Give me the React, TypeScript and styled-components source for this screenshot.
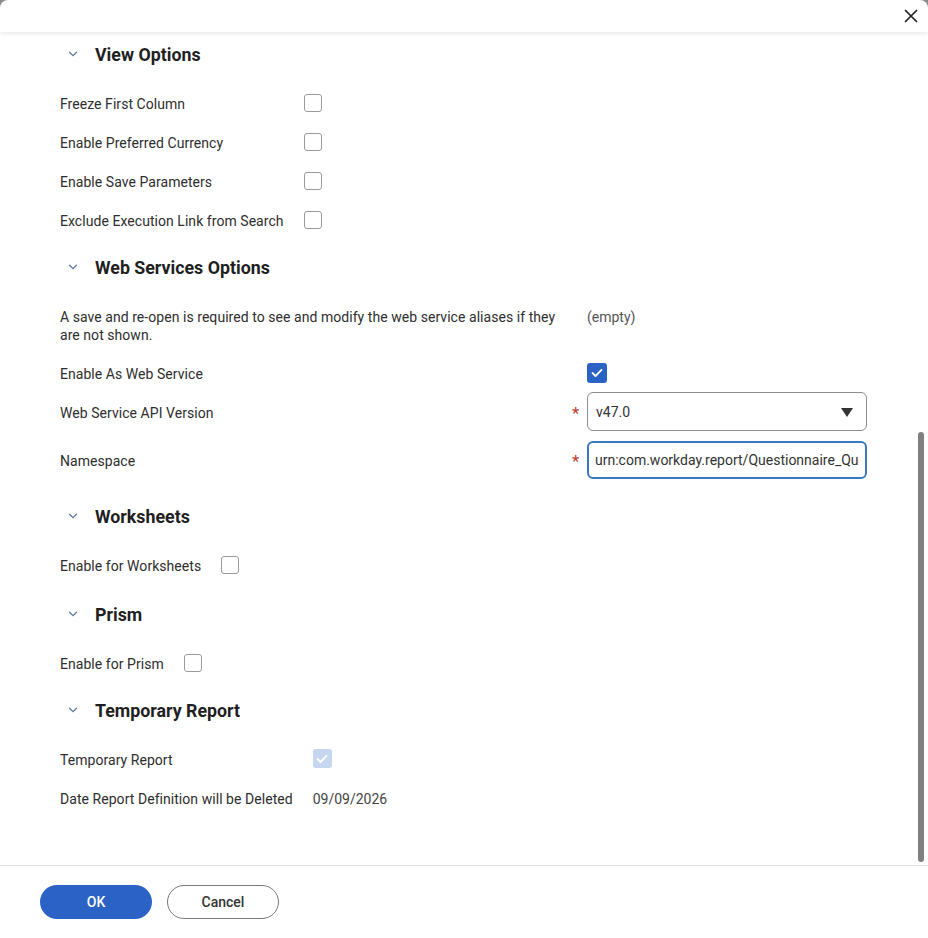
import React from "react";
import styled, { createGlobalStyle } from "styled-components";

const GlobalStyle = createGlobalStyle`
  html, body {
    margin: 0;
    padding: 0;
    background: #8a8a8a;
  }
  body {
    font-family: Roboto, "Noto Sans", "Liberation Sans", sans-serif;
    color: #333333;
  }
`;

const Dialog = styled.div`
  width: 928px;
  height: 938px;
  background: #ffffff;
  border-radius: 8px 8px 0 0;
  display: flex;
  flex-direction: column;
  overflow: hidden;
`;

const Header = styled.div`
  height: 32px;
  flex: none;
  display: flex;
  justify-content: flex-end;
  align-items: center;
  padding-right: 5px;
  box-shadow: 0 2px 4px rgba(0, 0, 0, 0.08);
  position: relative;
  z-index: 1;
`;

const CloseButton = styled.button`
  width: 24px;
  height: 24px;
  border: none;
  background: none;
  padding: 0;
  display: flex;
  align-items: center;
  justify-content: center;
  cursor: pointer;
`;

const Body = styled.div`
  flex: 1;
  display: flex;
  min-height: 0;
`;

const Content = styled.div`
  flex: 1;
  padding: 2px 0 0 60px;
  display: flex;
  flex-direction: column;
  gap: 8px;
`;

const ScrollTrack = styled.div`
  flex: none;
  display: flex;
  flex-direction: column;
  justify-content: flex-end;
  padding: 0 4px 3px 0;
`;

const ScrollThumb = styled.div`
  width: 6px;
  height: 430px;
  border-radius: 3px;
  background: #808080;
`;

const Section = styled.section<{ $tail?: number }>`
  display: flex;
  flex-direction: column;
  padding-bottom: ${(p) => p.$tail ?? 0}px;
`;

const SectionHeading = styled.div`
  height: 40px;
  display: flex;
  align-items: center;
  margin-bottom: 9px;
`;

const Chevron = styled.span`
  width: 35px;
  display: flex;
  align-items: center;
  padding-left: 8px;
  box-sizing: border-box;
`;

const SectionTitle = styled.h2`
  margin: 0;
  font-size: 17.8px;
  font-weight: 700;
  color: #1f1f1f;
`;

const FieldGrid = styled.div<{ $labelWidth?: string }>`
  display: grid;
  grid-template-columns: ${(p) => p.$labelWidth ?? "max-content"} auto;
  column-gap: 20px;
  justify-content: start;
`;

/* text sits a little low in its row, so the top padding is larger than the bottom */
const Label = styled.div<{ $pad?: number }>`
  font-size: 14px;
  line-height: 19px;
  color: #2e2e2e;
  letter-spacing: 0.05px;
  padding: ${(p) => (p.$pad ?? 10) + 1.5}px 0 ${(p) => (p.$pad ?? 10) - 1.5}px;
  display: flex;
  align-items: center;
  min-height: 19px;
`;

const Note = styled(Label)`
  line-height: 18px;
  padding: 12px 0 9px;
`;

const Value = styled.div<{ $pad?: number }>`
  display: flex;
  align-items: center;
  padding: ${(p) => p.$pad ?? 0}px 0;
  font-size: 14px;
  color: #444444;
`;

const DateValue = styled(Value)`
  padding-top: 3px;
`;

const EmptyValue = styled(Value)`
  align-items: flex-start;
  padding-top: 12px;
  line-height: 18px;
  color: #555555;
`;

const Box = styled.span<{ $checked?: boolean; $disabled?: boolean }>`
  width: ${(p) => (p.$checked ? (p.$disabled ? 19 : 20) : 18)}px;
  height: ${(p) => (p.$checked ? (p.$disabled ? 19 : 20) : 18)}px;
  box-sizing: border-box;
  border-radius: 3px;
  border: ${(p) => (p.$checked ? "none" : "1px solid #9a9a9a")};
  background: ${(p) =>
    p.$checked ? (p.$disabled ? "#c6d6ef" : "#2a62c6") : "#ffffff"};
  display: inline-flex;
  align-items: center;
  justify-content: center;
`;

const Required = styled.span`
  color: #c23b2a;
  font-size: 17px;
  margin-left: -15px;
  width: 15px;
  line-height: 1;
  padding-top: 4px;
`;

const SelectBox = styled.div`
  width: 280px;
  height: 39px;
  box-sizing: border-box;
  border: 1px solid #8c8c8c;
  border-radius: 6px;
  display: flex;
  align-items: center;
  justify-content: space-between;
  padding: 1px 13px 0 8px;
  font-size: 14px;
  color: #333333;
`;

const TextInput = styled.input`
  width: 280px;
  height: 38px;
  box-sizing: border-box;
  border: 2px solid #3b78c4;
  border-radius: 6px;
  padding: 1px 6px 0;
  font-family: inherit;
  font-size: 14px;
  color: #333333;
  outline: none;
`;

const Footer = styled.div`
  flex: none;
  height: 72px;
  border-top: 1px solid #e0e0e0;
  display: flex;
  align-items: center;
  gap: 15px;
  padding-left: 40px;
`;

const Button = styled.button<{ $primary?: boolean }>`
  width: 112px;
  height: 34px;
  border-radius: 17px;
  font-family: inherit;
  font-size: 14px;
  font-weight: 500;
  cursor: pointer;
  border: ${(p) => (p.$primary ? "none" : "1px solid #7a7a7a")};
  background: ${(p) => (p.$primary ? "#2a62c6" : "#ffffff")};
  color: ${(p) => (p.$primary ? "#ffffff" : "#333333")};
`;

const Check = ({ checked, disabled }: { checked?: boolean; disabled?: boolean }) => (
  <Box $checked={checked} $disabled={disabled}>
    {checked && (
      <svg width="12" height="10" viewBox="0 0 12 10">
        <polyline points="1.5,5 4.5,8 10.5,1.8" fill="none" stroke="#fff" strokeWidth="1.8" strokeLinecap="round" strokeLinejoin="round" />
      </svg>
    )}
  </Box>
);

const Heading = ({ title }: { title: string }) => (
  <SectionHeading>
    <Chevron>
      <svg width="10" height="6" viewBox="0 0 10 6">
        <polyline points="1.5,1.2 5,4.6 8.5,1.2" fill="none" stroke="#5b7aa5" strokeWidth="1.3" strokeLinecap="round" />
      </svg>
    </Chevron>
    <SectionTitle>{title}</SectionTitle>
  </SectionHeading>
);

const viewOptions = [
  "Freeze First Column",
  "Enable Preferred Currency",
  "Enable Save Parameters",
  "Exclude Execution Link from Search",
];

export default function App() {
  return (
    <>
      <GlobalStyle />
      <Dialog>
        <Header>
          <CloseButton aria-label="Close">
            <svg width="14" height="14" viewBox="0 0 14 14">
              <path d="M1.5 1.5 L12.5 12.5 M12.5 1.5 L1.5 12.5" stroke="#222" strokeWidth="1.7" strokeLinecap="round" />
            </svg>
          </CloseButton>
        </Header>
        <Body>
          <Content>
            <Section>
              <Heading title="View Options" />
              <FieldGrid>
                {viewOptions.map((label) => (
                  <React.Fragment key={label}>
                    <Label>{label}</Label>
                    <Value>
                      <Check />
                    </Value>
                  </React.Fragment>
                ))}
              </FieldGrid>
            </Section>

            <Section>
              <Heading title="Web Services Options" />
              <FieldGrid $labelWidth="507px">
                <Note>
                  A save and re-open is required to see and modify the web service aliases if they are not shown.
                </Note>
                <EmptyValue>(empty)</EmptyValue>

                <Label>Enable As Web Service</Label>
                <Value>
                  <Check checked />
                </Value>

                <Label $pad={10}>Web Service API Version</Label>
                <Value>
                  <Required>*</Required>
                  <SelectBox>
                    <span>v47.0</span>
                    <svg width="12" height="9" viewBox="0 0 12 9">
                      <polygon points="0,0 12,0 6,9" fill="#333" />
                    </svg>
                  </SelectBox>
                </Value>

                <Label $pad={19}>Namespace</Label>
                <Value $pad={9}>
                  <Required>*</Required>
                  <TextInput readOnly value="urn:com.workday.report/Questionnaire_Questions" />
                </Value>
              </FieldGrid>
            </Section>

            <Section $tail={2}>
              <Heading title="Worksheets" />
              <FieldGrid>
                <Label>Enable for Worksheets</Label>
                <Value>
                  <Check />
                </Value>
              </FieldGrid>
            </Section>

            <Section>
              <Heading title="Prism" />
              <FieldGrid>
                <Label>Enable for Prism</Label>
                <Value>
                  <Check />
                </Value>
              </FieldGrid>
            </Section>

            <Section>
              <Heading title="Temporary Report" />
              <FieldGrid>
                <Label>Temporary Report</Label>
                <Value>
                  <Check checked disabled />
                </Value>
                <Label>Date Report Definition will be Deleted</Label>
                <DateValue>09/09/2026</DateValue>
              </FieldGrid>
            </Section>
          </Content>
          <ScrollTrack>
            <ScrollThumb />
          </ScrollTrack>
        </Body>
        <Footer>
          <Button $primary>OK</Button>
          <Button>Cancel</Button>
        </Footer>
      </Dialog>
    </>
  );
}
